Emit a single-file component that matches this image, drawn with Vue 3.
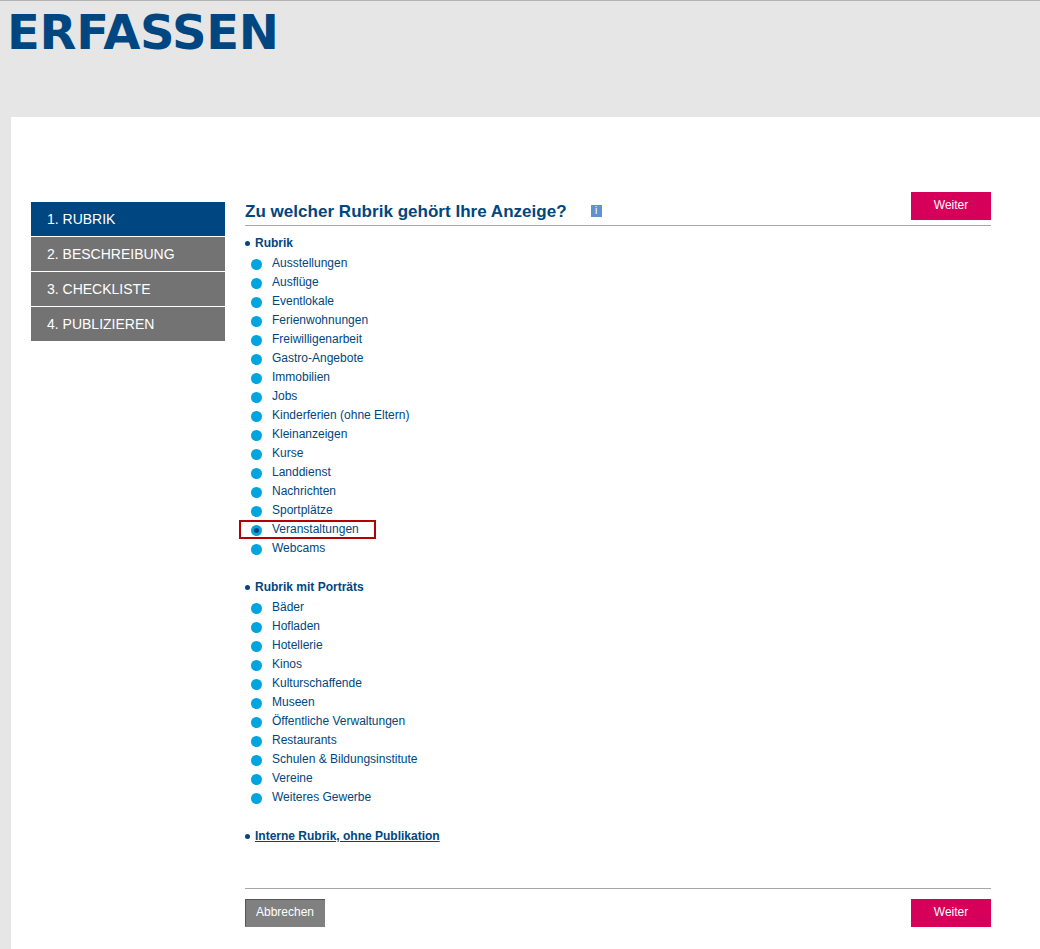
<script setup>
const steps = [
  { label: '1. RUBRIK', active: true },
  { label: '2. BESCHREIBUNG' },
  { label: '3. CHECKLISTE' },
  { label: '4. PUBLIZIEREN' }
]
const rubrik = ['Ausstellungen','Ausflüge','Eventlokale','Ferienwohnungen','Freiwilligenarbeit','Gastro-Angebote','Immobilien','Jobs','Kinderferien (ohne Eltern)','Kleinanzeigen','Kurse','Landdienst','Nachrichten','Sportplätze','Veranstaltungen','Webcams']
const portraets = ['Bäder','Hofladen','Hotellerie','Kinos','Kulturschaffende','Museen','Öffentliche Verwaltungen','Restaurants','Schulen & Bildungsinstitute','Vereine','Weiteres Gewerbe']
</script>

<template>
  <div class="page">
    <header class="top">
      <h1 class="title">ERFASSEN</h1>
    </header>
    <div class="sheet">
      <nav class="steps">
        <div v-for="s in steps" :key="s.label" class="step" :class="{ active: s.active }">{{ s.label }}</div>
      </nav>
      <main class="content">
        <div class="head">
          <h2 class="question">Zu welcher Rubrik gehört Ihre Anzeige?</h2>
          <span class="info">i</span>
          <button class="btn next head-btn">Weiter</button>
        </div>
        <div class="group-title"><span class="dot"></span>Rubrik</div>
        <ul class="list">
          <li v-for="r in rubrik" :key="r" class="row">
            <span class="radio"><span v-if="r === 'Veranstaltungen'" class="inner"></span></span>
            <span>{{ r }}</span>
            <span v-if="r === 'Veranstaltungen'" class="mark"></span>
          </li>
        </ul>
        <div class="group-title second"><span class="dot"></span>Rubrik mit Porträts</div>
        <ul class="list">
          <li v-for="r in portraets" :key="r" class="row">
            <span class="radio"></span>
            <span>{{ r }}</span>
          </li>
        </ul>
        <div class="group-title second"><span class="dot"></span><a class="link">Interne Rubrik, ohne Publikation</a></div>
        <div class="foot">
          <button class="btn cancel">Abbrechen</button>
          <button class="btn next">Weiter</button>
        </div>
      </main>
    </div>
  </div>
</template>

<style>
html, body { margin: 0; background: #e6e6e6; }
</style>

<style scoped>
.page {
  height: 949px;
  overflow: hidden;
  background: #e6e6e6;
  border-top: 1px solid #b3b3b3;
  box-sizing: border-box;
  font-family: "Liberation Sans", Arial, sans-serif;
  color: #004680;
}
.top { height: 116px; padding-left: 7px; box-sizing: border-box; }
.title {
  margin: 0;
  font-family: "DejaVu Sans", "Liberation Sans", sans-serif;
  font-weight: 700;
  font-size: 48px;
  line-height: 62px;
  color: #004680;
  letter-spacing: -0.3px;
}
.sheet {
  margin-left: 11px;
  background: #fff;
  height: 832px;
  padding: 85px 49px 0 20px;
  box-sizing: border-box;
  display: flex;
  gap: 20px;
}
.steps { width: 194px; flex: none; display: flex; flex-direction: column; gap: 1px; }
.step {
  height: 34px;
  background: #737373;
  color: #fff;
  font-size: 14px;
  line-height: 34px;
  padding-left: 16px;
}
.step.active { background: #004680; }
.content { flex: 1; min-width: 0; margin-top: -10px; }
.head {
  height: 33px;
  border-bottom: 1px solid #a6a6a6;
  display: flex;
  align-items: flex-start;
}
.question {
  margin: 10px 0 0;
  font-size: 17px;
  line-height: 20px;
  font-weight: 700;
  letter-spacing: 0.03px;
  color: #004680;
}
.info {
  width: 11px;
  height: 12px;
  margin: 13px 0 0 24px;
  background: #5f93d0;
  color: #fff;
  font-size: 10px;
  line-height: 12px;
  text-align: center;
}
.btn {
  border: 0;
  width: 80px;
  height: 28px;
  padding: 0 0 2px;
  font-family: "Liberation Sans", Arial, sans-serif;
  font-size: 12px;
  font-weight: 400;
  color: #fff;
}
.next { background: #d6005a; }
.head-btn { margin-left: auto; }
.group-title {
  margin-top: 10px;
  height: 14px;
  font-size: 12px;
  line-height: 14px;
  font-weight: 700;
  display: flex;
  align-items: center;
}
.group-title.second { margin-top: 22px; }
.dot {
  width: 5px;
  height: 5px;
  border-radius: 50%;
  background: #004680;
  margin-right: 5px;
}
.link { text-decoration: underline; }
.list { list-style: none; margin: 4px 0 0; padding: 0; }
.row {
  height: 19px;
  font-size: 12px;
  line-height: 19px;
  display: flex;
  align-items: center;
  padding-left: 6px;
  position: relative;
}
.radio {
  width: 11px;
  height: 11px;
  border-radius: 50%;
  background: #00a5e0;
  margin-right: 10px;
  margin-top: 2px;
  display: flex;
  align-items: center;
  justify-content: center;
}
.inner { width: 5px; height: 5px; border-radius: 50%; background: #004680; }
.mark {
  position: absolute;
  left: -6px;
  top: 0;
  width: 133px;
  height: 15px;
  border: 2px solid #b30000;
}
.foot {
  margin-top: 45px;
  border-top: 1px solid #a6a6a6;
  padding-top: 10px;
  display: flex;
  justify-content: space-between;
}
.cancel {
  background: #808080;
  border-top: 1px solid #555;
  border-left: 1px solid #555;
  border-radius: 1px 0 0 1px;
  padding: 0 1px 3px 0;
}
</style>
